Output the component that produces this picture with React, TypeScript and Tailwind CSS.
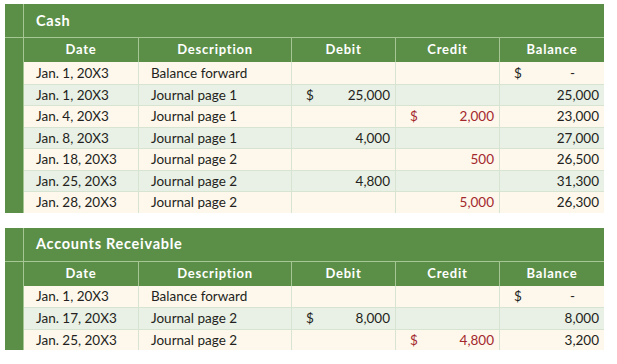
type Amount = { sign?: boolean; value: string } | null;

type Row = {
  date: string;
  desc: string;
  debit: Amount;
  credit: Amount;
  balance: Amount;
};

const cashRows: Row[] = [
  { date: "Jan. 1, 20X3", desc: "Balance forward", debit: null, credit: null, balance: { sign: true, value: "-" } },
  { date: "Jan. 1, 20X3", desc: "Journal page 1", debit: { sign: true, value: "25,000" }, credit: null, balance: { value: "25,000" } },
  { date: "Jan. 4, 20X3", desc: "Journal page 1", debit: null, credit: { sign: true, value: "2,000" }, balance: { value: "23,000" } },
  { date: "Jan. 8, 20X3", desc: "Journal page 1", debit: { value: "4,000" }, credit: null, balance: { value: "27,000" } },
  { date: "Jan. 18, 20X3", desc: "Journal page 2", debit: null, credit: { value: "500" }, balance: { value: "26,500" } },
  { date: "Jan. 25, 20X3", desc: "Journal page 2", debit: { value: "4,800" }, credit: null, balance: { value: "31,300" } },
  { date: "Jan. 28, 20X3", desc: "Journal page 2", debit: null, credit: { value: "5,000" }, balance: { value: "26,300" } },
];

const arRows: Row[] = [
  { date: "Jan. 1, 20X3", desc: "Balance forward", debit: null, credit: null, balance: { sign: true, value: "-" } },
  { date: "Jan. 17, 20X3", desc: "Journal page 2", debit: { sign: true, value: "8,000" }, credit: null, balance: { value: "8,000" } },
  { date: "Jan. 25, 20X3", desc: "Journal page 2", debit: null, credit: { sign: true, value: "4,800" }, balance: { value: "3,200" } },
];

function AmountCell({ amount, red, last }: { amount: Amount; red?: boolean; last?: boolean }) {
  const color = red ? "text-[#a3282c]" : "text-[#231f20]";
  return (
    <div className={`flex w-[104px] items-center justify-between pl-[14px] pr-[5px] ${color} ${last ? "" : "border-r border-[#d8e4d2]"}`}>
      <span>{amount?.sign ? "$" : ""}</span>
      <span className={amount?.value === "-" ? "pr-[24px]" : ""}>{amount?.value ?? ""}</span>
    </div>
  );
}

function Ledger({ title, rows }: { title: string; rows: Row[] }) {
  return (
    <div className="w-[599px] bg-[#5b8f48]">
      <div className="flex h-[34px] border-b border-[#a6c694]">
        <div className="w-[19px] border-r border-[#a6c694]" />
        <div className="flex items-center pl-[12px] text-[14.5px] font-bold tracking-[0.05em] text-white">{title}</div>
      </div>
      <div className="flex">
        <div className="w-[19px] border-r border-[#a6c694]" />
        <div className="flex flex-1 flex-col">
          <div className="flex h-[24px] text-[13px] font-bold tracking-[0.06em] text-white">
            <div className="flex w-[115px] items-center justify-center border-r border-[#a6c694]">Date</div>
            <div className="flex w-[153px] items-center justify-center border-r border-[#a6c694]">Description</div>
            <div className="flex w-[104px] items-center justify-center border-r border-[#a6c694]">Debit</div>
            <div className="flex w-[104px] items-center justify-center border-r border-[#a6c694]">Credit</div>
            <div className="flex flex-1 items-center justify-center">Balance</div>
          </div>
          {rows.map((r, i) => (
            <div
              key={i}
              className={`flex h-[21.5px] text-[13.5px] text-[#231f20] ${i > 0 ? "border-t border-[#d8e4d2]" : ""} ${i % 2 === 0 ? "bg-[#fdf7ec]" : "bg-[#e9f0e5]"}`}
            >
              <div className="flex w-[115px] items-center border-r border-[#d8e4d2] pl-[12px]">{r.date}</div>
              <div className="flex w-[153px] items-center border-r border-[#d8e4d2] pl-[12px]">{r.desc}</div>
              <AmountCell amount={r.debit} />
              <AmountCell amount={r.credit} red />
              <AmountCell amount={r.balance} last />
            </div>
          ))}
        </div>
      </div>
    </div>
  );
}

export default function App() {
  return (
    <div className="flex h-[364px] w-[617px] flex-col gap-[15px] bg-white pl-[5px] pt-[4px]" style={{ fontFamily: 'Lato, sans-serif' }}>
      <Ledger title="Cash" rows={cashRows} />
      <Ledger title="Accounts Receivable" rows={arRows} />
    </div>
  );
}
